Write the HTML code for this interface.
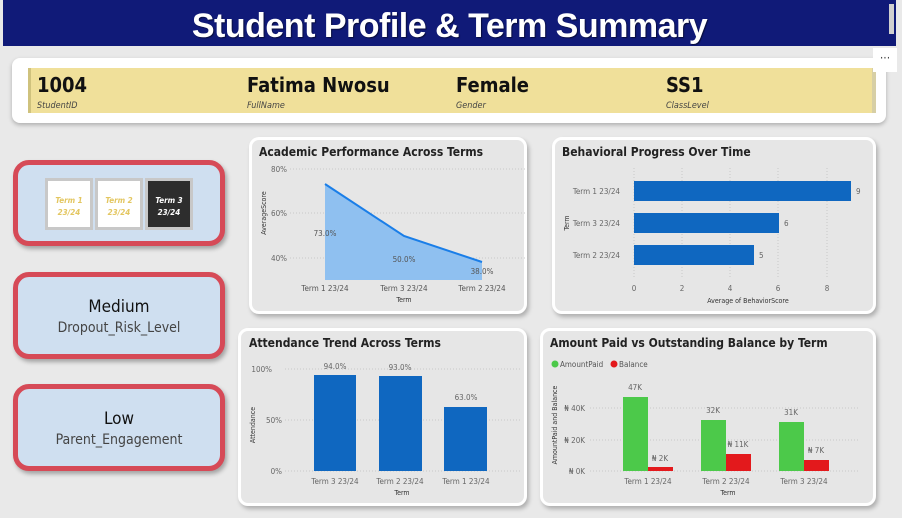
<!DOCTYPE html>
<html><head><meta charset="utf-8"><style>
*{margin:0;padding:0;box-sizing:border-box}
body{width:902px;height:518px;background:#e9e9e9;position:relative;overflow:hidden;font-family:"DejaVu Sans Condensed","Liberation Sans",sans-serif}
.abs{position:absolute}
.hdr{left:3px;top:0;width:893px;height:46px;background:#101a78;color:#fff;font:bold 34px "Liberation Sans",sans-serif;text-align:center;line-height:52px;letter-spacing:-0.5px;text-shadow:1px 1px 1px rgba(0,0,0,.5)}
.sb{left:889px;top:4px;width:5px;height:30px;background:#d0d0d0}
.info{left:12px;top:58px;width:874px;height:65px;background:#fff;border-radius:8px;box-shadow:0 2px 4px rgba(0,0,0,.25)}
.yel{left:28px;top:68px;width:848px;height:45px;background:#f0e09a;border-left:3px solid #cfc27d;border-right:4px solid #d7cfa5}
.v{font:bold 20px "DejaVu Sans Condensed",sans-serif;color:#111;top:73px}
.l{font:italic 9px "DejaVu Sans Condensed",sans-serif;color:#444;top:101px}
.dots{left:873px;top:48px;width:24px;height:24px;background:#fff;text-align:center;font-size:12px;color:#444;line-height:20px}
.lc{left:13px;width:212px;height:87px;background:#cfdff0;border:5px solid #d64a57;border-radius:16px;box-shadow:2px 3px 4px rgba(0,0,0,.3);text-align:center}
.big{font-size:17px;color:#111;margin-top:20px}
.sm{font-size:14px;color:#444;margin-top:3px}
.t{width:48px;height:52px;top:178px;border:3px solid #c8c8c8;background:#fff;font:italic bold 8px "DejaVu Sans Condensed",sans-serif;color:#e3c660;text-align:center;padding-top:14px;line-height:12px}
.card{background:#e6e6e6;border:3px solid #fff;border-radius:10px;box-shadow:2px 3px 4px rgba(0,0,0,.25)}
</style></head><body>
<div class="abs hdr">Student Profile &amp; Term Summary</div>
<div class="abs sb"></div>
<div class="abs info"></div>
<div class="abs yel"></div>
<div class="abs dots">···</div>
<div class="abs v" style="left:37px">1004</div>
<div class="abs v" style="left:247px">Fatima Nwosu</div>
<div class="abs v" style="left:456px">Female</div>
<div class="abs v" style="left:666px">SS1</div>
<div class="abs l" style="left:37px">StudentID</div>
<div class="abs l" style="left:247px">FullName</div>
<div class="abs l" style="left:456px">Gender</div>
<div class="abs l" style="left:666px">ClassLevel</div>

<div class="abs lc" style="top:160px;height:86px"></div>
<div class="abs t" style="left:45px">Term 1<br>23/24</div>
<div class="abs t" style="left:95px">Term 2<br>23/24</div>
<div class="abs t" style="left:145px;background:#2d2d2d;color:#fff">Term 3<br>23/24</div>
<div class="abs lc" style="top:272px"><div class="big">Medium</div><div class="sm">Dropout_Risk_Level</div></div>
<div class="abs lc" style="top:384px"><div class="big">Low</div><div class="sm">Parent_Engagement</div></div>

<div class="abs card" style="left:249px;top:137px;width:278px;height:177px"></div>
<div class="abs card" style="left:552px;top:137px;width:324px;height:177px"></div>
<div class="abs card" style="left:238px;top:328px;width:289px;height:178px"></div>
<div class="abs card" style="left:540px;top:328px;width:336px;height:178px"></div>

<svg class="abs" style="left:0;top:0" width="902" height="518" font-family="DejaVu Sans Condensed, Liberation Sans, sans-serif">
<g font-weight="bold" font-size="12" fill="#222">
<text x="259" y="156">Academic Performance Across Terms</text>
<text x="562" y="156">Behavioral Progress Over Time</text>
<text x="249" y="347">Attendance Trend Across Terms</text>
<text x="550" y="347">Amount Paid vs Outstanding Balance by Term</text>
</g>
<g stroke="#c8c8c8" stroke-dasharray="1,2">
<line x1="290" x2="525" y1="169" y2="169"/><line x1="290" x2="525" y1="213" y2="213"/><line x1="290" x2="525" y1="258" y2="258"/>
<line x1="634" x2="634" y1="168" y2="278"/><line x1="682" x2="682" y1="168" y2="278"/><line x1="730" x2="730" y1="168" y2="278"/><line x1="778" x2="778" y1="168" y2="278"/><line x1="827" x2="827" y1="168" y2="278"/>
<line x1="285" x2="520" y1="369" y2="369"/><line x1="285" x2="520" y1="420" y2="420"/><line x1="285" x2="520" y1="471" y2="471"/>
<line x1="590" x2="860" y1="408" y2="408"/><line x1="590" x2="860" y1="440" y2="440"/><line x1="590" x2="860" y1="471" y2="471"/>
</g>
<g font-size="8" fill="#666">
<text x="287" y="172" text-anchor="end">80%</text><text x="287" y="216" text-anchor="end">60%</text><text x="287" y="261" text-anchor="end">40%</text>
</g>
<path d="M325 184 L404 236 L482 262 L482 280 L325 280Z" fill="#8fc0f0"/>
<path d="M325 184 L404 236 L482 262" fill="none" stroke="#1a7ee8" stroke-width="2"/>
<g font-size="8" fill="#555" text-anchor="middle">
<text x="325" y="236">73.0%</text><text x="404" y="262">50.0%</text><text x="482" y="274">38.0%</text>
<text x="325" y="291">Term 1 23/24</text><text x="404" y="291">Term 3 23/24</text><text x="482" y="291">Term 2 23/24</text>
<text x="404" y="302" font-size="7" fill="#333">Term</text>
<text transform="translate(266,213) rotate(-90)" font-size="7" fill="#333">AverageScore</text>
</g>
<g fill="#0f67c0">
<rect x="634" y="181" width="217" height="20"/><rect x="634" y="213" width="145" height="20"/><rect x="634" y="245" width="120" height="20"/>
</g>
<g font-size="8" fill="#666">
<text x="620" y="194" text-anchor="end">Term 1 23/24</text><text x="620" y="226" text-anchor="end">Term 3 23/24</text><text x="620" y="258" text-anchor="end">Term 2 23/24</text>
<text x="856" y="194">9</text><text x="784" y="226">6</text><text x="759" y="258">5</text>
<g text-anchor="middle"><text x="634" y="291">0</text><text x="682" y="291">2</text><text x="730" y="291">4</text><text x="778" y="291">6</text><text x="827" y="291">8</text>
<text x="748" y="303" font-size="7" fill="#333">Average of BehaviorScore</text>
<text transform="translate(569,223) rotate(-90)" font-size="7" fill="#333">Term</text></g>
</g>
<g fill="#0f67c0"><rect x="314" y="375" width="42" height="96"/><rect x="379" y="376" width="43" height="95"/><rect x="444" y="407" width="43" height="64"/></g>
<g font-size="8" fill="#666" text-anchor="middle">
<text x="272" y="372" text-anchor="end">100%</text><text x="282" y="423" text-anchor="end">50%</text><text x="282" y="474" text-anchor="end">0%</text>
<text x="335" y="369">94.0%</text><text x="400" y="370">93.0%</text><text x="466" y="400">63.0%</text>
<text x="335" y="484">Term 3 23/24</text><text x="400" y="484">Term 2 23/24</text><text x="466" y="484">Term 1 23/24</text>
<text x="402" y="495" font-size="7" fill="#333">Term</text>
<text transform="translate(255,425) rotate(-90)" font-size="7" fill="#333">Attendance</text>
</g>
<circle cx="555" cy="364" r="3.5" fill="#4cc94a"/><circle cx="614" cy="364" r="3.5" fill="#e3191c"/>
<g font-size="8" fill="#555"><text x="560" y="367">AmountPaid</text><text x="619" y="367">Balance</text></g>
<g fill="#4cc94a"><rect x="623" y="397" width="25" height="74"/><rect x="701" y="420" width="25" height="51"/><rect x="779" y="422" width="25" height="49"/></g>
<g fill="#e3191c"><rect x="648" y="467" width="25" height="4"/><rect x="726" y="454" width="25" height="17"/><rect x="804" y="460" width="25" height="11"/></g>
<g font-size="8" fill="#666" text-anchor="middle">
<text x="585" y="411" text-anchor="end">₦ 40K</text><text x="585" y="443" text-anchor="end">₦ 20K</text><text x="585" y="474" text-anchor="end">₦ 0K</text>
<text x="635" y="390">47K</text><text x="660" y="461">₦ 2K</text><text x="713" y="413">32K</text><text x="738" y="447">₦ 11K</text><text x="791" y="415">31K</text><text x="816" y="453">₦ 7K</text>
<text x="648" y="484">Term 1 23/24</text><text x="726" y="484">Term 2 23/24</text><text x="804" y="484">Term 3 23/24</text>
<text x="728" y="495" font-size="7" fill="#333">Term</text>
<text transform="translate(557,425) rotate(-90)" font-size="7" fill="#333">AmountPaid and Balance</text>
</g>
</svg>
</body></html>
